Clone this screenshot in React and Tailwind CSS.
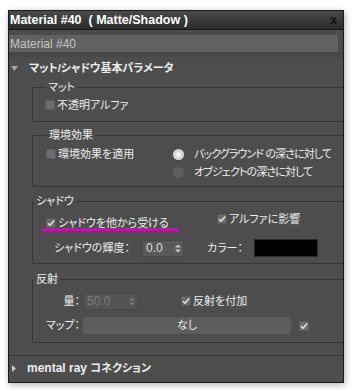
import { Fragment } from 'react'

const font = "font-['Liberation_Sans','Noto_Sans_CJK_JP',sans-serif] [font-feature-settings:'palt']"

function CheckBox({ checked }) {
  return (
    <span className="flex h-[10px] w-[10px] shrink-0 items-center justify-center border border-[#5a5a5a] bg-[#6c6c6c]">
      {checked && (
        <svg width="9" height="8" viewBox="0 0 9 8">
          <path d="M1 4.2 L3.4 6.6 L8 1.2" fill="none" stroke="#e8e8e8" strokeWidth="1.6" />
        </svg>
      )}
    </span>
  )
}

function Check({ checked, label }) {
  return (
    <div className="flex h-[14px] items-center gap-[2px]">
      <CheckBox checked={checked} />
      <span className="leading-[14px]">{label}</span>
    </div>
  )
}

function Radio({ selected, label }) {
  return (
    <div className="flex h-[14px] items-center gap-[10px]">
      <span className={`flex h-[11px] w-[11px] items-center justify-center rounded-full ${selected ? 'bg-[#d8d8d8]' : 'bg-[#5e5e5e]'}`}>
        {selected && <span className="h-[5px] w-[5px] rounded-full bg-[#f4f4f4]" />}
      </span>
      <span className="leading-[14px] tracking-[-0.9px]">{label}</span>
    </div>
  )
}

function Spinner({ value, width, disabled }) {
  return (
    <div
      className={`flex h-[17px] items-center justify-between rounded-[2px] border border-[#474747] pl-[3px] pr-[2px] ${
        disabled ? 'bg-[#545454] text-[#7c7c7c]' : 'bg-[#5a5a5a] text-[#dcdcdc]'
      }`}
      style={{ width }}
    >
      <span className="font-['Liberation_Sans',sans-serif] text-[12px] leading-none">{value}</span>
      <svg width="6" height="9" viewBox="0 0 6 9">
        <path d="M0 3.5 L3 0.5 L6 3.5Z M0 5.5 L3 8.5 L6 5.5Z" fill={disabled ? '#7c7c7c' : '#c8c8c8'} />
      </svg>
    </div>
  )
}

function Group({ title, className, children }) {
  return (
    <fieldset className={`w-[316px] rounded-[2px] border border-[#363636] ${className}`}>
      <legend className="ml-[1px] px-[2px] text-[11px] leading-[14px]">{title}</legend>
      {children}
    </fieldset>
  )
}

export default function App() {
  return (
    <div className={`min-h-[390px] w-[352px] bg-white pl-[8px] pt-[10px] text-[11px] text-[#ededed] ${font}`}>
      <div className="flex h-[373px] w-[336px] flex-col overflow-hidden border border-[#1a1a1a] bg-[#4d4d4d] shadow-[1px_2px_7px_rgba(0,0,0,0.3)]">
        <div className="flex h-[19px] shrink-0 items-center justify-between border-b border-[#151515] bg-gradient-to-b from-[#4a4a4a] to-[#2b2b2b] pl-[1px] pr-[6px]">
          <span className="text-[12.5px] font-bold leading-none text-white">Material #40&nbsp;&nbsp;( Matte/Shadow )</span>
          <span className="text-[12px] font-bold leading-none text-[#0e0e0e]">x</span>
        </div>

        <div className="mt-[5px] flex h-[17px] w-[329px] shrink-0 items-center bg-[#616161] pl-[1px] text-[12px] text-[#c6c6c6]">
          Material #40
        </div>
        <div className="h-[5px] shrink-0 bg-[#474747]" />

        <div className="flex h-[22px] shrink-0 items-center">
          <svg className="ml-[2px]" width="7" height="5" viewBox="0 0 7 5">
            <path d="M0 0 L7 0 L3.5 5Z" fill="#a8a8a8" />
          </svg>
          <span className="ml-[11px] text-[11px] font-bold">マット/シャドウ基本パラメータ</span>
        </div>

        <div className="ml-[23px] flex flex-col">
          <Group title="マット" className="mt-[1px] pb-[9px] pl-[12px] pt-[4px]">
            <Check label="不透明アルファ" />
          </Group>

          <Group title="環境効果" className="mt-[6px] pb-[7px] pl-[13px] pt-[5px]">
            <div className="grid grid-cols-[127px_1fr] gap-y-[4px]">
              <Check label="環境効果を適用" />
              <Radio selected label="バックグラウンド の深さに対して" />
              <div />
              <Radio label="オブジェクトの深さに対して" />
            </div>
          </Group>

          <Group title="シャドウ" className="mt-[7px] pb-[6px] pt-[4px]">
            <div className="relative flex items-start pl-[13px]">
              <div className="mt-[4px] w-[171px]">
                <Check checked label="シャドウを他から受ける" />
              </div>
              <Check checked label="アルファに影響" />
              <span className="absolute left-[9px] top-[16px] h-[3px] w-[136px] bg-[#e000c4]" />
            </div>
            <div className="mt-[9px] flex h-[18px] items-center pl-[21px]">
              <span className="w-[88px]">シャドウの輝度：</span>
              <Spinner value="0.0" width={42} />
              <span className="ml-[23px] w-[47px]">カラー：</span>
              <span className="h-[18px] w-[64px] border border-[#2a2a2a] bg-black" />
            </div>
          </Group>

          <Group title="反射" className="mt-[8px] pb-[8px] pt-[7px]">
            <div className="flex h-[16px] items-center">
              <span className="w-[47px] text-right">量：</span>
              <span className="ml-[3px]">
                <Spinner value="50.0" width={55} disabled />
              </span>
              <span className="ml-[43px]">
                <Check checked label="反射を付加" />
              </span>
            </div>
            <div className="mt-[8px] flex h-[17px] items-center">
              <span className="w-[47px] text-right">マップ：</span>
              <span className="ml-[3px] flex h-[17px] w-[208px] items-center justify-center rounded-[3px] bg-[#5d5d5d]">なし</span>
              <span className="ml-[8px]">
                <CheckBox checked />
              </span>
            </div>
          </Group>
        </div>

        <div className="mt-[12px] h-px shrink-0 bg-[#393939]" />
        <div className="flex h-[24px] shrink-0 items-center">
          <svg className="ml-[3px]" width="4" height="7" viewBox="0 0 4 7">
            <path d="M0 0 L4 3.5 L0 7Z" fill="#c8c8c8" />
          </svg>
          <span className="ml-[11px] text-[12px] font-bold">
            mental ray <span className="text-[11px]">コネクション</span>
          </span>
        </div>
      </div>
    </div>
  )
}
